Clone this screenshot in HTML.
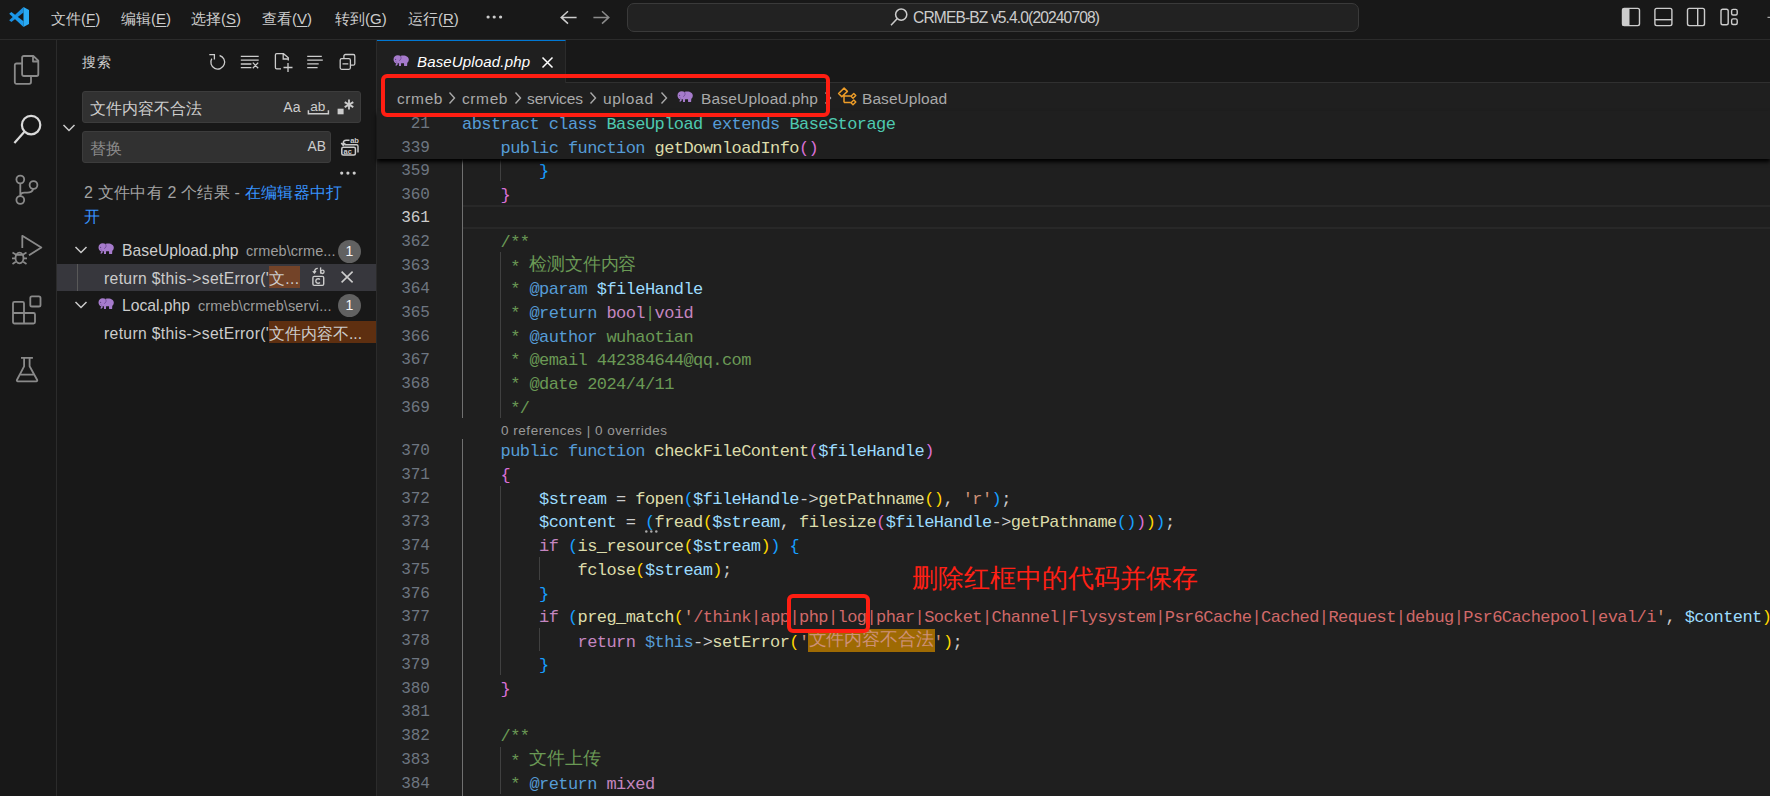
<!DOCTYPE html>
<html><head><meta charset="utf-8">
<style>
*{box-sizing:border-box;margin:0;padding:0}
html,body{width:1770px;height:796px;overflow:hidden;background:#1F1F1F}
body{position:relative;font-family:"Liberation Sans",sans-serif;color:#CCCCCC}
.a{position:absolute}
svg{position:absolute;overflow:visible}
/* title bar */
#title{left:0;top:0;width:1770px;height:40px;background:#181818;border-bottom:1px solid #2B2B2B}
.menu{position:absolute;top:9px;font-size:15px;line-height:20px;color:#CCCCCC;white-space:nowrap}
#cc{left:627px;top:3px;width:732px;height:29px;background:#222222;border:1px solid #3A3A3A;border-radius:7px}
/* activity bar */
#act{left:0;top:40px;width:57px;height:756px;background:#181818;border-right:1px solid #2B2B2B}
/* sidebar */
#side{left:57px;top:40px;width:320px;height:756px;background:#181818;border-right:1px solid #2B2B2B}
.st{position:absolute;white-space:nowrap;font-size:15px;line-height:20px}
.inp{position:absolute;background:#313131;border:1px solid #3C3C3C;border-radius:3px}
/* editor */
#tabs{left:377px;top:40px;width:1393px;height:43px;background:#181818;border-bottom:1px solid #303030}
#tab{left:377px;top:40px;width:189px;height:43px;background:#1F1F1F;border-top:1px solid #0078D4;border-right:1px solid #2B2B2B}
.bc{position:absolute;top:88.8px;font-size:15.5px;line-height:20px;color:#A9A9A9;white-space:nowrap}
.ln{position:absolute;left:462px;height:23.72px;line-height:23.72px;font-family:"Liberation Mono",monospace;font-size:17px;letter-spacing:-0.575px;white-space:pre;color:#CCCCCC}
.num{position:absolute;left:390px;width:40px;text-align:right;height:23.72px;line-height:23.72px;font-family:"Liberation Mono",monospace;font-size:16.04px;color:#6E7681}
.num.act{color:#CCCCCC}
b.cj{font-weight:normal;font-family:"Liberation Sans",sans-serif;font-size:18px;letter-spacing:-0.2px;position:relative;top:-2px}
.hl{}
#sticky{left:377px;top:111px;width:1393px;height:48px;background:#1F1F1F;box-shadow:0 3px 4px #000;z-index:5}
.guide{position:absolute;width:1px;background:#404040}
.redbox{position:absolute;border:4px solid #FF1E12;border-radius:6px;z-index:10}
</style></head><body>
<!-- TITLE BAR -->
<div id="title" class="a"></div>
<svg style="left:0px;top:0px" width="32" height="30"><path d="M23.5 7 L23.5 12.6 L11.4 21.9 L9.2 20.3 Z" fill="#1B8FE0"/><path d="M23.5 26.9 L23.5 21.3 L11.4 12.1 L9.2 13.7 Z" fill="#1C9AEC"/><path d="M23.5 7 L29 9.9 V24.1 L23.5 26.9 Z" fill="#2AABF5"/></svg>
<div class="menu" style="left:51px">文件(<u style="text-underline-offset:2px;text-decoration-thickness:1px">F</u>)</div>
<div class="menu" style="left:121px">编辑(<u style="text-underline-offset:2px;text-decoration-thickness:1px">E</u>)</div>
<div class="menu" style="left:191px">选择(<u style="text-underline-offset:2px;text-decoration-thickness:1px">S</u>)</div>
<div class="menu" style="left:262px">查看(<u style="text-underline-offset:2px;text-decoration-thickness:1px">V</u>)</div>
<div class="menu" style="left:335px">转到(<u style="text-underline-offset:2px;text-decoration-thickness:1px">G</u>)</div>
<div class="menu" style="left:408px">运行(<u style="text-underline-offset:2px;text-decoration-thickness:1px">R</u>)</div>
<svg style="left:480px;top:10px" width="30" height="14"><circle cx="8.1" cy="7" r="1.6" fill="#CCCCCC"/><circle cx="14.2" cy="7" r="1.6" fill="#CCCCCC"/><circle cx="20.6" cy="7" r="1.6" fill="#CCCCCC"/></svg>
<svg style="left:550px;top:0px" width="70" height="40"><path d="M11 17.4 H26.6 M18 11.2 L11.2 17.4 L18 23.6" stroke="#CCCCCC" stroke-width="1.5" fill="none"/><path d="M43.4 17.4 H59 M52 11.2 L58.8 17.4 L52 23.6" stroke="#8B8B8B" stroke-width="1.5" fill="none"/></svg>
<div id="cc" class="a"></div>
<svg style="left:889px;top:7px" width="20" height="20"><circle cx="12.2" cy="7.6" r="5.6" stroke="#CCCCCC" stroke-width="1.5" fill="none"/><path d="M8.3 11.6 L2 18.3" stroke="#CCCCCC" stroke-width="1.5"/></svg>
<div class="menu" style="left:913px;top:8px;font-size:15.6px;--tw:187;letter-spacing:-0.876px">CRMEB-BZ v5.4.0(20240708)</div>
<!-- layout icons -->
<svg style="left:1610px;top:0px" width="160" height="40">
<rect x="12.5" y="8.4" width="17" height="17.2" rx="1.8" stroke="#CCCCCC" stroke-width="1.4" fill="none"/><rect x="12.5" y="8.4" width="7" height="17.2" fill="#CCCCCC"/>
<rect x="44.9" y="8.4" width="17" height="17.2" rx="1.8" stroke="#CCCCCC" stroke-width="1.4" fill="none"/><path d="M44.9 19.7 H61.9" stroke="#CCCCCC" stroke-width="1.4"/>
<rect x="77.5" y="8.4" width="17" height="17.2" rx="1.8" stroke="#CCCCCC" stroke-width="1.4" fill="none"/><path d="M87.7 8.4 V25.6" stroke="#CCCCCC" stroke-width="1.4"/>
<rect x="111" y="9.2" width="7.2" height="15.6" rx="1.8" stroke="#CCCCCC" stroke-width="1.4" fill="none"/>
<rect x="121.6" y="9.4" width="5.6" height="5.6" rx="1.5" stroke="#CCCCCC" stroke-width="1.4" fill="none"/>
<rect x="121.6" y="18.9" width="5.6" height="5.6" rx="1.5" stroke="#CCCCCC" stroke-width="1.4" fill="none"/>
<path d="M157.5 17.3 H160" stroke="#CCCCCC" stroke-width="1"/>
</svg>

<!-- ACTIVITY BAR -->
<div id="act" class="a"></div>
<!-- explorer -->
<svg style="left:8px;top:50px" width="40" height="40"><path d="M14 13.5 H8.5 a1.7 1.7 0 0 0 -1.7 1.7 V32.1 a1.7 1.7 0 0 0 1.7 1.7 H21.3 a1.7 1.7 0 0 0 1.7 -1.7 V26" stroke="#8A8A8A" stroke-width="1.8" fill="none"/><path d="M14.1 7.7 a1.7 1.7 0 0 1 1.7 -1.7 H25.3 L30.3 10.7 V24.3 a1.7 1.7 0 0 1 -1.7 1.7 H15.8 a1.7 1.7 0 0 1 -1.7 -1.7 Z M25 6 V11.5 H30.3" stroke="#8A8A8A" stroke-width="1.8" fill="none" stroke-linejoin="round"/></svg>
<!-- search -->
<svg style="left:8px;top:108px" width="40" height="40"><circle cx="23.1" cy="17.1" r="9.2" stroke="#DADADA" stroke-width="2.2" fill="none"/><path d="M16.4 23.8 L6.4 35" stroke="#DADADA" stroke-width="2.2"/></svg>
<!-- scm -->
<svg style="left:8px;top:170px" width="40" height="40"><circle cx="12.3" cy="9.5" r="3.9" stroke="#8A8A8A" stroke-width="1.8" fill="none"/><circle cx="25.5" cy="15" r="3.9" stroke="#8A8A8A" stroke-width="1.8" fill="none"/><circle cx="12.3" cy="30" r="3.9" stroke="#8A8A8A" stroke-width="1.8" fill="none"/><path d="M12.3 13.4 V26.1 M25.2 18.9 C24.5 21.5 22.5 22.6 19 22.6 H16.5 C14 22.6 12.3 24 12.3 26" stroke="#8A8A8A" stroke-width="1.8" fill="none"/></svg>
<!-- run debug -->
<svg style="left:8px;top:230px" width="40" height="40"><path d="M14.3 18 V5.8 L33.3 17.5 L21 25.3" stroke="#8A8A8A" stroke-width="1.8" fill="none" stroke-linejoin="round"/><ellipse cx="11.5" cy="28" rx="4" ry="5.3" stroke="#8A8A8A" stroke-width="1.8" fill="none"/><path d="M7.5 24.8 H15.5 M4.5 22.5 L7.8 24.5 M18.5 22.5 L15.2 24.5 M4 28.4 H7.5 M19 28.4 H15.5 M4.5 34 L7.8 31.8 M18.5 34 L15.2 31.8" stroke="#8A8A8A" stroke-width="1.7" fill="none"/></svg>
<!-- extensions -->
<svg style="left:8px;top:290px" width="40" height="40"><path d="M5 13.3 a1.5 1.5 0 0 1 1.5 -1.5 H14.5 a1.5 1.5 0 0 1 1.5 1.5 V23 H25.5 a1.5 1.5 0 0 1 1.5 1.5 V32 a1.5 1.5 0 0 1 -1.5 1.5 H6.5 a1.5 1.5 0 0 1 -1.5 -1.5 Z M5 23 H16 V33.5" stroke="#8A8A8A" stroke-width="1.8" fill="none"/><rect x="22.3" y="6.3" width="10.2" height="10.2" rx="1.6" stroke="#8A8A8A" stroke-width="1.8" fill="none"/></svg>
<!-- testing -->
<svg style="left:8px;top:350px" width="40" height="40"><path d="M13 7.9 H24.9 M16.1 7.9 V16.3 L8.9 30 a0.9 0.9 0 0 0 0.8 1.3 H28.4 a0.9 0.9 0 0 0 0.8 -1.3 L21.6 16.3 V7.9 M12.5 24.6 H25.5" stroke="#8A8A8A" stroke-width="1.8" fill="none" stroke-linejoin="round"/></svg>

<!-- SIDEBAR -->
<div id="side" class="a"></div>
<div class="st" style="left:82px;top:52px;font-size:14px;--tw:28.5;letter-spacing:0.500px">搜索</div>
<!-- header icons -->
<svg style="left:200px;top:48px" width="160" height="28">
<path d="M19.6 7.5 A6.9 6.9 0 1 1 11.8 10.6" stroke="#CCCCCC" stroke-width="1.3" fill="none"/>
<path d="M9.3 6.7 H14.4 V11.6" stroke="#CCCCCC" stroke-width="1.3" fill="none"/>
<path d="M40.8 8.4 H58.7 M40.8 12.1 H58.7 M40.8 16 H51.4 M40.8 19.7 H51.4 M52.8 14.6 L58.2 20.2 M58.2 14.6 L52.8 20.2" stroke="#CCCCCC" stroke-width="1.3" fill="none"/>
<path d="M81 20.8 H76.7 a1.3 1.3 0 0 1 -1.3 -1.3 V7 a1.3 1.3 0 0 1 1.3 -1.3 H83.5 L88.3 9.8 V12.5 M83.2 5.7 V11 H88.3 M88 15 V24 M83.5 19.5 H92.5" stroke="#CCCCCC" stroke-width="1.3" fill="none"/>
<path d="M107.2 8.3 H121.8 M107.2 12.1 H122.8 M107.2 15.9 H118.7 M107.2 19.6 H117.6" stroke="#CCCCCC" stroke-width="1.3" fill="none"/>
<rect x="140.2" y="10.7" width="10.2" height="10.6" rx="1.5" stroke="#CCCCCC" stroke-width="1.3" fill="none"/>
<path d="M143.9 10.7 V8 a1.5 1.5 0 0 1 1.5 -1.5 H153.3 a1.5 1.5 0 0 1 1.5 1.5 V15.7 a1.5 1.5 0 0 1 -1.5 1.5 H150.4 M142.5 15.9 H148.3" stroke="#CCCCCC" stroke-width="1.3" fill="none"/>
</svg>
<!-- chevron -->
<svg style="left:62px;top:122.5px" width="16" height="12"><path d="M1.5 2 L7 7.5 L12.5 2" stroke="#CCCCCC" stroke-width="1.5" fill="none"/></svg>
<div class="inp" style="left:82px;top:91px;width:279px;height:32px"></div>
<div class="st" style="left:90px;top:98.3px;font-size:16.4px">文件内容不合法</div>





<div class="inp" style="left:82px;top:131px;width:249px;height:32px"></div>
<div class="st" style="left:90px;top:137.6px;font-size:16.4px;color:#8B8B8B">替换</div>

<svg style="left:270px;top:90px" width="100" height="90">
<text x="13.3" y="21.6" font-size="14" fill="#CCCCCC" font-family="Liberation Sans">Aa</text>
<text x="40.2" y="20.9" font-size="13.6" fill="#CCCCCC" font-family="Liberation Sans">ab</text>
<path d="M38.4 20.2 V23.8 H58.4 V20.2" stroke="#CCCCCC" stroke-width="1.5" fill="none"/>
<rect x="67.6" y="18.7" width="6" height="5.6" fill="#CCCCCC"/>
<path d="M79 9.6 V19.6 M74.7 12.1 L83.3 17.1 M83.3 12.1 L74.7 17.1" stroke="#CCCCCC" stroke-width="1.8"/>
<text x="37.6" y="60.9" font-size="13.8" fill="#CCCCCC" font-family="Liberation Sans">AB</text>
<rect x="71.8" y="57.2" width="13.6" height="7.9" rx="1.5" stroke="#CCCCCC" stroke-width="1.5" fill="none"/>
<text x="73.6" y="63.6" font-size="7.5" font-weight="bold" fill="#CCCCCC" font-family="Liberation Sans">ac</text>
<path d="M74.5 54.8 H86.5 a1.5 1.5 0 0 1 1.5 1.5 V62.5" stroke="#CCCCCC" stroke-width="1.4" fill="none"/>
<path d="M79.5 50.3 H76.2 a3 3 0 0 0 -3 3 V55.2 M71.2 53 L73.2 55.4 L75.2 53" stroke="#CCCCCC" stroke-width="1.4" fill="none"/>
<text x="80.2" y="52.6" font-size="7.5" font-weight="bold" fill="#CCCCCC" font-family="Liberation Sans">ab</text>
<circle cx="71.7" cy="83.1" r="1.6" fill="#CCCCCC"/><circle cx="77.9" cy="83.1" r="1.6" fill="#CCCCCC"/><circle cx="84.2" cy="83.1" r="1.6" fill="#CCCCCC"/>
</svg>

<div class="st" style="left:84px;top:183px;color:#A2A2A2;font-size:16px;--tw:258;letter-spacing:0.232px">2 文件中有 2 个结果 - <span style="color:#3794FF">在编辑器中打</span></div>
<div class="st" style="left:84px;top:207px;color:#3794FF;font-size:16px">开</div>
<!-- results -->
<svg style="left:74px;top:245px" width="14" height="10"><path d="M1.5 2 L7 7.5 L12.5 2" stroke="#CCCCCC" stroke-width="1.5" fill="none"/></svg>
<svg style="left:98.2px;top:243px" width="17" height="12" viewBox="0 0 17 12"><path d="M0.5 4.5 C0.5 1.8 2.2 0.2 4.8 0.2 C6 0.2 6.8 0.5 7.5 0.9 C8.2 0.6 9.2 0.5 10.2 0.5 C13.5 0.5 15.8 2.2 15.8 4.6 C15.8 6 15.2 7.2 14.3 7.8 L14.1 11 L11.1 11 L11 8.3 L8.1 8.3 L8 11 L6 11 L5.9 8.3 C5.2 8.2 4.8 8 4.5 7.7 L4.9 9.3 L3 11 L2.4 10 L3.4 8.6 C1.6 7.8 0.5 6.5 0.5 4.5 Z" fill="#A67BCC"/><path d="M7.5 1 C8.6 2.5 8.1 4.9 6.2 5.6" stroke="#6E4C94" stroke-width="0.9" fill="none"/><circle cx="2.6" cy="4.3" r="0.6" fill="#5A3D7A"/><path d="M2.7 6.4 L3.6 7.2" stroke="#5A3D7A" stroke-width="0.7"/></svg>
<div class="st" style="left:122px;top:241px;color:#CCCCCC;font-size:15.7px;--tw:116.5;letter-spacing:0.037px">BaseUpload.php</div>
<div class="st" style="left:246px;top:241px;color:#9D9D9D;font-size:14.5px;--tw:89.5;letter-spacing:0.073px">crmeb\crme...</div>
<div class="a" style="left:338px;top:240px;width:23px;height:23px;border-radius:12px;background:#616161;color:#F8F8F8;font-size:14px;line-height:23px;text-align:center">1</div>
<div class="a" style="left:57px;top:264px;width:319px;height:27px;background:#37373D"></div>
<div class="a" style="left:77px;top:264px;width:1px;height:27px;background:#585858"></div>
<div class="a" style="left:268.8px;top:266px;width:31px;height:22px;background:#734328"></div>
<div class="st" style="left:104px;top:269px;color:#CCCCCC;font-size:15.7px;--tw:164.8;letter-spacing:0.345px">return $this-&gt;setError('</div>
<div class="st" style="left:269px;top:269px;color:#CCCCCC;font-size:15.7px;--tw:30;letter-spacing:0.307px">文...</div>
<svg style="left:300px;top:262px" width="60" height="30">
<rect x="12.9" y="14.4" width="10.8" height="9" rx="1.3" stroke="#CCCCCC" stroke-width="1.4" fill="none"/>
<path d="M19.9 17.5 A2.3 2.3 0 1 0 19.9 20.5" stroke="#CCCCCC" stroke-width="1.4" fill="none"/>
<path d="M17.8 6.4 C15.6 6.4 14.4 8 14.4 10.6 M12.8 9.1 L14.4 11 L16 9.1" stroke="#CCCCCC" stroke-width="1.3" fill="none"/>
<path d="M20.6 5.4 V11.6" stroke="#CCCCCC" stroke-width="1.3"/><circle cx="22.4" cy="9.8" r="1.7" stroke="#CCCCCC" stroke-width="1.3" fill="none"/>
<path d="M41.6 9.6 L52.6 20.4 M52.6 9.6 L41.6 20.4" stroke="#CCCCCC" stroke-width="1.6"/>
</svg>
<svg style="left:74px;top:300px" width="14" height="10"><path d="M1.5 2 L7 7.5 L12.5 2" stroke="#CCCCCC" stroke-width="1.5" fill="none"/></svg>
<svg style="left:98.2px;top:298px" width="17" height="12" viewBox="0 0 17 12"><path d="M0.5 4.5 C0.5 1.8 2.2 0.2 4.8 0.2 C6 0.2 6.8 0.5 7.5 0.9 C8.2 0.6 9.2 0.5 10.2 0.5 C13.5 0.5 15.8 2.2 15.8 4.6 C15.8 6 15.2 7.2 14.3 7.8 L14.1 11 L11.1 11 L11 8.3 L8.1 8.3 L8 11 L6 11 L5.9 8.3 C5.2 8.2 4.8 8 4.5 7.7 L4.9 9.3 L3 11 L2.4 10 L3.4 8.6 C1.6 7.8 0.5 6.5 0.5 4.5 Z" fill="#A67BCC"/><path d="M7.5 1 C8.6 2.5 8.1 4.9 6.2 5.6" stroke="#6E4C94" stroke-width="0.9" fill="none"/><circle cx="2.6" cy="4.3" r="0.6" fill="#5A3D7A"/><path d="M2.7 6.4 L3.6 7.2" stroke="#5A3D7A" stroke-width="0.7"/></svg>
<div class="st" style="left:122px;top:296px;color:#CCCCCC;font-size:15.7px;--tw:68;letter-spacing:-0.006px">Local.php</div>
<div class="st" style="left:198px;top:296px;color:#9D9D9D;font-size:14.5px;--tw:133.5;letter-spacing:0.113px">crmeb\crmeb\servi...</div>
<div class="a" style="left:338px;top:294px;width:23px;height:23px;border-radius:12px;background:#616161;color:#F8F8F8;font-size:14px;line-height:23px;text-align:center">1</div>
<div class="a" style="left:268.8px;top:321px;width:107px;height:22px;background:#5E2F10"></div>
<div class="st" style="left:104px;top:324px;color:#CCCCCC;font-size:15.7px;--tw:164.8;letter-spacing:0.345px">return $this-&gt;setError('</div>
<div class="st" style="left:269px;top:324px;color:#CCCCCC;font-size:15.7px;--tw:93;letter-spacing:-0.011px">文件内容不...</div>

<!-- EDITOR -->
<div id="tabs" class="a"></div>
<div id="tab" class="a"></div>
<svg style="left:393px;top:54.7px" width="17" height="12" viewBox="0 0 17 12"><path d="M0.5 4.5 C0.5 1.8 2.2 0.2 4.8 0.2 C6 0.2 6.8 0.5 7.5 0.9 C8.2 0.6 9.2 0.5 10.2 0.5 C13.5 0.5 15.8 2.2 15.8 4.6 C15.8 6 15.2 7.2 14.3 7.8 L14.1 11 L11.1 11 L11 8.3 L8.1 8.3 L8 11 L6 11 L5.9 8.3 C5.2 8.2 4.8 8 4.5 7.7 L4.9 9.3 L3 11 L2.4 10 L3.4 8.6 C1.6 7.8 0.5 6.5 0.5 4.5 Z" fill="#A67BCC"/><path d="M7.5 1 C8.6 2.5 8.1 4.9 6.2 5.6" stroke="#6E4C94" stroke-width="0.9" fill="none"/><circle cx="2.6" cy="4.3" r="0.6" fill="#5A3D7A"/><path d="M2.7 6.4 L3.6 7.2" stroke="#5A3D7A" stroke-width="0.7"/></svg>
<div class="st" style="left:417px;top:52px;font-style:italic;color:#FFFFFF;--tw:113;letter-spacing:0.160px">BaseUpload.php</div>
<svg style="left:541px;top:56px" width="13" height="13"><path d="M1.5 1.5 L11.5 11.5 M11.5 1.5 L1.5 11.5" stroke="#FFFFFF" stroke-width="1.5"/></svg>

<div class="bc" style="left:397px;--tw:45.5;letter-spacing:0.605px">crmeb</div>
<div class="bc" style="left:462px;--tw:45.5;letter-spacing:0.605px">crmeb</div>
<div class="bc" style="left:527px;--tw:56;letter-spacing:-0.123px">services</div>
<div class="bc" style="left:603px;--tw:50;letter-spacing:0.691px">upload</div>
<div class="bc" style="left:701px;--tw:117;letter-spacing:0.183px">BaseUpload.php</div>
<div class="bc" style="left:862px;--tw:85;letter-spacing:0.061px">BaseUpload</div>
<svg style="left:448px;top:91px" width="8" height="14"><path d="M1.5 1.5 L6.5 7 L1.5 12.5" stroke="#A9A9A9" stroke-width="1.4" fill="none"/></svg>
<svg style="left:514px;top:91px" width="8" height="14"><path d="M1.5 1.5 L6.5 7 L1.5 12.5" stroke="#A9A9A9" stroke-width="1.4" fill="none"/></svg>
<svg style="left:589px;top:91px" width="8" height="14"><path d="M1.5 1.5 L6.5 7 L1.5 12.5" stroke="#A9A9A9" stroke-width="1.4" fill="none"/></svg>
<svg style="left:660px;top:91px" width="8" height="14"><path d="M1.5 1.5 L6.5 7 L1.5 12.5" stroke="#A9A9A9" stroke-width="1.4" fill="none"/></svg>
<svg style="left:824px;top:91px" width="8" height="14"><path d="M1.5 1.5 L6.5 7 L1.5 12.5" stroke="#A9A9A9" stroke-width="1.4" fill="none"/></svg>
<svg style="left:677.2px;top:91px" width="17" height="12" viewBox="0 0 17 12"><path d="M0.5 4.5 C0.5 1.8 2.2 0.2 4.8 0.2 C6 0.2 6.8 0.5 7.5 0.9 C8.2 0.6 9.2 0.5 10.2 0.5 C13.5 0.5 15.8 2.2 15.8 4.6 C15.8 6 15.2 7.2 14.3 7.8 L14.1 11 L11.1 11 L11 8.3 L8.1 8.3 L8 11 L6 11 L5.9 8.3 C5.2 8.2 4.8 8 4.5 7.7 L4.9 9.3 L3 11 L2.4 10 L3.4 8.6 C1.6 7.8 0.5 6.5 0.5 4.5 Z" fill="#A67BCC"/><path d="M7.5 1 C8.6 2.5 8.1 4.9 6.2 5.6" stroke="#6E4C94" stroke-width="0.9" fill="none"/><circle cx="2.6" cy="4.3" r="0.6" fill="#5A3D7A"/><path d="M2.7 6.4 L3.6 7.2" stroke="#5A3D7A" stroke-width="0.7"/></svg>
<svg style="left:834px;top:84px" width="28" height="26"><path d="M4.6 9.5 L10.1 4.1 L13.4 7.4 L7.8 12.8 Z M10 11 V18.6 M10 11.9 H16.8 M10 18.6 H16.8" stroke="#EE9D28" stroke-width="1.5" fill="none" stroke-linejoin="round"/><path d="M17 12.2 L19.8 9.4 L21.8 11.4 L19 14.2 Z M17 18.8 L19.8 16 L21.8 18 L19 20.8 Z" stroke="#EE9D28" stroke-width="1.4" fill="none" stroke-linejoin="round"/></svg>

<!-- guides -->
<div class="guide" style="left:462px;top:157.8px;height:260.2px;background:#707070"></div>
<div class="guide" style="left:462px;top:439px;height:357px;background:#707070"></div>
<div class="guide" style="left:500px;top:157.8px;height:23.7px;background:#404040"></div>
<div class="guide" style="left:500px;top:252.4px;height:165.6px;background:#404040"></div>
<div class="guide" style="left:500px;top:485.5px;height:189.8px;background:#404040"></div>
<div class="guide" style="left:500px;top:746.5px;height:47.5px;background:#404040"></div>
<div class="guide" style="left:539px;top:556.6px;height:23.7px;background:#404040"></div>
<div class="guide" style="left:539px;top:627.8px;height:23.7px;background:#404040"></div>
<!-- current line -->
<div class="a" style="left:463px;top:205px;width:1307px;height:24px;border-top:2px solid #282828;border-bottom:2px solid #282828"></div>

<div class="a" style="left:808.3px;top:629px;width:126.7px;height:23.3px;background:#9E6A03"></div>
<div class="num" style="top:160.10px">359</div>
<div class="num" style="top:183.75px">360</div>
<div class="num act" style="top:207.40px">361</div>
<div class="num" style="top:231.05px">362</div>
<div class="num" style="top:254.70px">363</div>
<div class="num" style="top:278.35px">364</div>
<div class="num" style="top:302.00px">365</div>
<div class="num" style="top:325.65px">366</div>
<div class="num" style="top:349.30px">367</div>
<div class="num" style="top:372.95px">368</div>
<div class="num" style="top:396.60px">369</div>
<div class="num" style="top:440.30px">370</div>
<div class="num" style="top:464.03px">371</div>
<div class="num" style="top:487.76px">372</div>
<div class="num" style="top:511.49px">373</div>
<div class="num" style="top:535.22px">374</div>
<div class="num" style="top:558.95px">375</div>
<div class="num" style="top:582.68px">376</div>
<div class="num" style="top:606.41px">377</div>
<div class="num" style="top:630.14px">378</div>
<div class="num" style="top:653.87px">379</div>
<div class="num" style="top:677.60px">380</div>
<div class="num" style="top:701.33px">381</div>
<div class="num" style="top:725.06px">382</div>
<div class="num" style="top:748.79px">383</div>
<div class="num" style="top:772.52px">384</div>
<div class="ln" style="top:160.10px">        <span style="color:#179FFF">}</span></div>
<div class="ln" style="top:183.75px">    <span style="color:#DA70D6">}</span></div>
<div class="ln" style="top:207.40px"></div>
<div class="ln" style="top:231.05px"><span style="color:#6A9955">    /**</span></div>
<div class="ln" style="top:254.70px"><span style="color:#6A9955">     * <b class="cj">检</b><b class="cj">测</b><b class="cj">文</b><b class="cj">件</b><b class="cj">内</b><b class="cj">容</b></span></div>
<div class="ln" style="top:278.35px"><span style="color:#6A9955">     * </span><span style="color:#569CD6">@param</span> <span style="color:#9CDCFE">$fileHandle</span></div>
<div class="ln" style="top:302.00px"><span style="color:#6A9955">     * </span><span style="color:#569CD6">@return</span> <span style="color:#C586C0">bool</span><span style="color:#6A9955">|</span><span style="color:#C586C0">void</span></div>
<div class="ln" style="top:325.65px"><span style="color:#6A9955">     * </span><span style="color:#569CD6">@author</span><span style="color:#6A9955"> wuhaotian</span></div>
<div class="ln" style="top:349.30px"><span style="color:#6A9955">     * @email 442384644@qq.com</span></div>
<div class="ln" style="top:372.95px"><span style="color:#6A9955">     * @date 2024/4/11</span></div>
<div class="ln" style="top:396.60px"><span style="color:#6A9955">     */</span></div>
<div class="ln" style="top:440.30px">    <span style="color:#569CD6">public</span> <span style="color:#569CD6">function</span> <span style="color:#DCDCAA">checkFileContent</span><span style="color:#DA70D6">(</span><span style="color:#9CDCFE">$fileHandle</span><span style="color:#DA70D6">)</span></div>
<div class="ln" style="top:464.03px">    <span style="color:#DA70D6">{</span></div>
<div class="ln" style="top:487.76px">        <span style="color:#9CDCFE">$stream</span><span style="color:#CCCCCC"> = </span><span style="color:#DCDCAA">fopen</span><span style="color:#179FFF">(</span><span style="color:#9CDCFE">$fileHandle</span><span style="color:#CCCCCC">-&gt;</span><span style="color:#DCDCAA">getPathname</span><span style="color:#FFD700">()</span><span style="color:#CCCCCC">, </span><span style="color:#CE9178">&#x27;r&#x27;</span><span style="color:#179FFF">)</span><span style="color:#CCCCCC">;</span></div>
<div class="ln" style="top:511.49px">        <span style="color:#9CDCFE">$content</span><span style="color:#CCCCCC"> = </span><span style="color:#179FFF">(</span><span style="color:#DCDCAA">fread</span><span style="color:#FFD700">(</span><span style="color:#9CDCFE">$stream</span><span style="color:#CCCCCC">, </span><span style="color:#DCDCAA">filesize</span><span style="color:#DA70D6">(</span><span style="color:#9CDCFE">$fileHandle</span><span style="color:#CCCCCC">-&gt;</span><span style="color:#DCDCAA">getPathname</span><span style="color:#179FFF">()</span><span style="color:#DA70D6">)</span><span style="color:#FFD700">)</span><span style="color:#179FFF">)</span><span style="color:#CCCCCC">;</span></div>
<div class="ln" style="top:535.22px">        <span style="color:#C586C0">if</span> <span style="color:#179FFF">(</span><span style="color:#DCDCAA">is_resource</span><span style="color:#FFD700">(</span><span style="color:#9CDCFE">$stream</span><span style="color:#FFD700">)</span><span style="color:#179FFF">)</span> <span style="color:#179FFF">{</span></div>
<div class="ln" style="top:558.95px">            <span style="color:#DCDCAA">fclose</span><span style="color:#FFD700">(</span><span style="color:#9CDCFE">$stream</span><span style="color:#FFD700">)</span><span style="color:#CCCCCC">;</span></div>
<div class="ln" style="top:582.68px">        <span style="color:#179FFF">}</span></div>
<div class="ln" style="top:606.41px">        <span style="color:#C586C0">if</span> <span style="color:#179FFF">(</span><span style="color:#DCDCAA">preg_match</span><span style="color:#FFD700">(</span><span style="color:#CE9178">&#x27;</span><span style="color:#D16969">/think|app|php|log|phar|Socket|Channel|Flysystem|Psr6Cache|Cached|Request|debug|Psr6Cachepool|eval/i</span><span style="color:#CE9178">&#x27;</span><span style="color:#CCCCCC">, </span><span style="color:#9CDCFE">$content</span><span style="color:#FFD700">)</span><span style="color:#179FFF">)</span> <span style="color:#179FFF">{</span></div>
<div class="ln" style="top:630.14px">            <span style="color:#C586C0">return</span> <span style="color:#569CD6">$this</span><span style="color:#CCCCCC">-&gt;</span><span style="color:#DCDCAA">setError</span><span style="color:#FFD700">(</span><span style="color:#CE9178">&#x27;</span><span class="hl" style="color:#CE9178"><b class="cj">文</b><b class="cj">件</b><b class="cj">内</b><b class="cj">容</b><b class="cj">不</b><b class="cj">合</b><b class="cj">法</b></span><span style="color:#CE9178">&#x27;</span><span style="color:#FFD700">)</span><span style="color:#CCCCCC">;</span></div>
<div class="ln" style="top:653.87px">        <span style="color:#179FFF">}</span></div>
<div class="ln" style="top:677.60px">    <span style="color:#DA70D6">}</span></div>
<div class="ln" style="top:701.33px"></div>
<div class="ln" style="top:725.06px"><span style="color:#6A9955">    /**</span></div>
<div class="ln" style="top:748.79px"><span style="color:#6A9955">     * <b class="cj">文</b><b class="cj">件</b><b class="cj">上</b><b class="cj">传</b></span></div>
<div class="ln" style="top:772.52px"><span style="color:#6A9955">     * </span><span style="color:#569CD6">@return</span> <span style="color:#C586C0">mixed</span></div>
<div class="a" style="left:501px;top:421.5px;font-size:13.5px;line-height:18px;color:#999999;white-space:nowrap;--tw:166;letter-spacing:0.526px">0 references | 0 overrides</div>

<div id="sticky" class="a"></div>
<div class="a" style="left:377px;top:110px;width:1393px;height:48px;z-index:6">
</div>
<div style="position:absolute;left:0;top:0;z-index:7"><div class="ln" style="top:112.80px"><span style="color:#569CD6">abstract</span> <span style="color:#569CD6">class</span> <span style="color:#4EC9B0">BaseUpload</span> <span style="color:#569CD6">extends</span> <span style="color:#4EC9B0">BaseStorage</span></div><div class="num" style="top:112.80px">21</div>
<div class="ln" style="top:136.50px">    <span style="color:#569CD6">public</span> <span style="color:#569CD6">function</span> <span style="color:#DCDCAA">getDownloadInfo</span><span style="color:#DA70D6">()</span></div><div class="num" style="top:136.50px">339</div></div>

<svg style="left:640px;top:526px" width="22" height="10"><circle cx="6.3" cy="5.4" r="1.25" fill="#A8A8A8"/><circle cx="11.3" cy="5.4" r="1.25" fill="#A8A8A8"/><circle cx="16.3" cy="5.4" r="1.25" fill="#A8A8A8"/></svg>
<!-- annotations -->
<div class="redbox" style="left:381px;top:74px;width:449px;height:43px"></div>
<div class="redbox" style="left:787px;top:594px;width:83px;height:39px"></div>
<div class="a" style="left:912px;top:561px;font-size:26px;line-height:34px;color:#FF2015;white-space:nowrap;z-index:10">删除红框中的代码并保存</div>
</body></html>
